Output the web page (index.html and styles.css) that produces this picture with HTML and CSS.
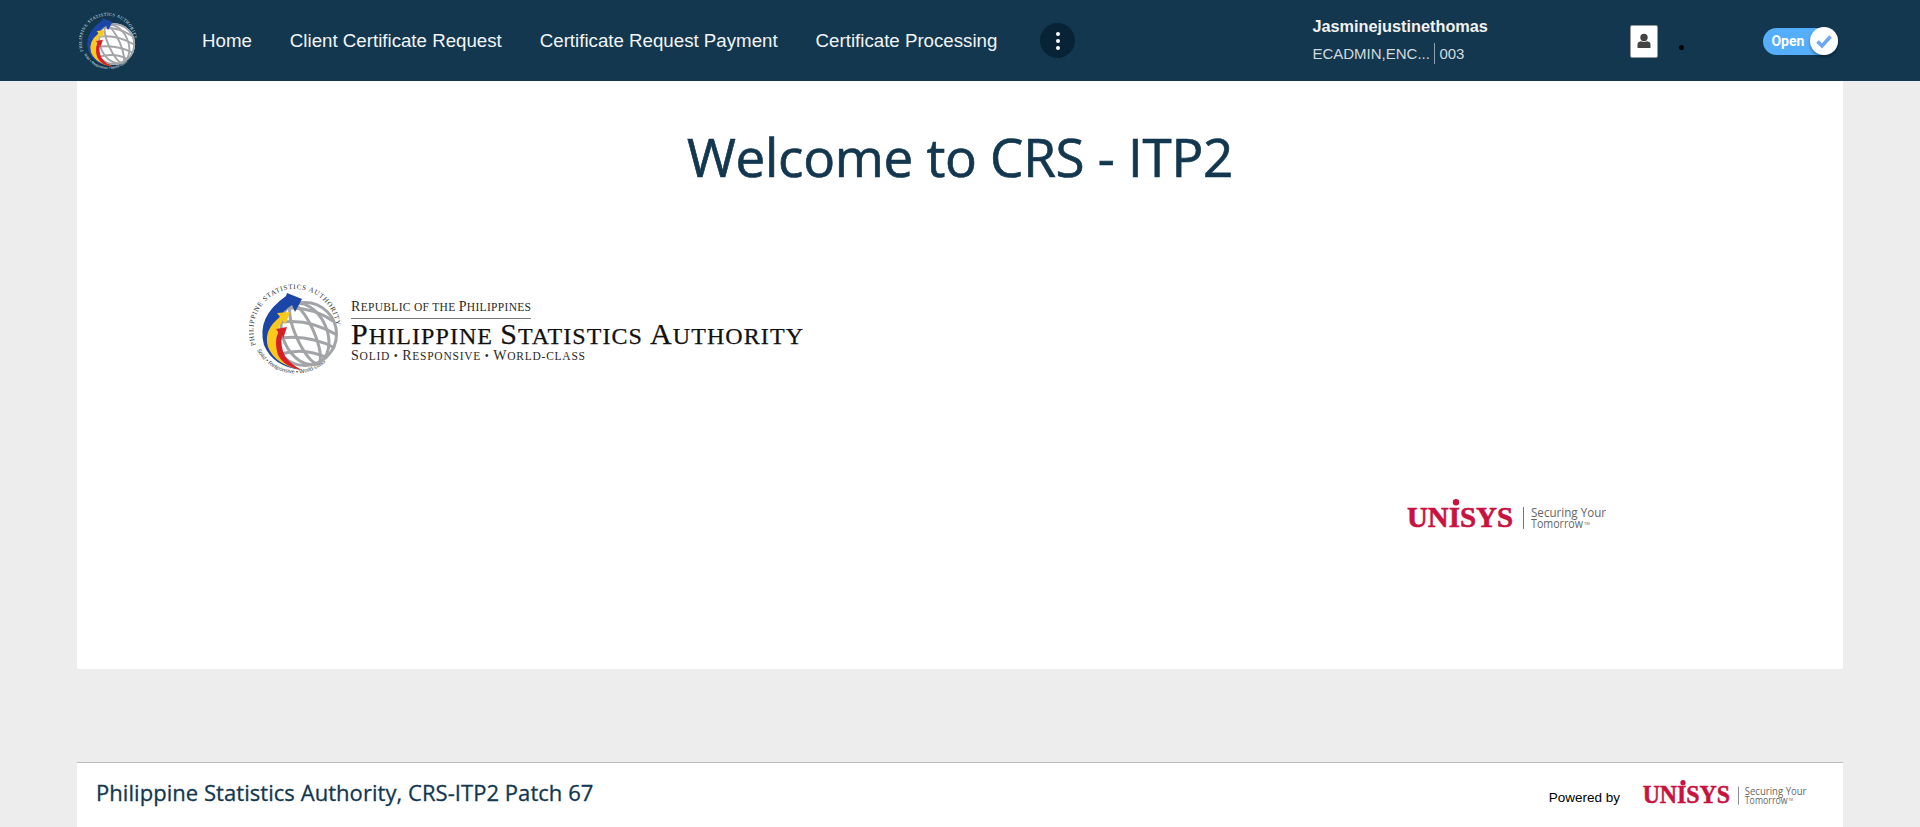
FILE: index.html
```html
<!DOCTYPE html>
<html lang="en">
<head>
<meta charset="utf-8">
<title>CRS - ITP2</title>
<link rel="stylesheet" href="styles.css">
</head>
<body>
<svg class="defs" width="0" height="0" aria-hidden="true">
  <defs>
    <symbol id="psa-seal" viewBox="0 0 92 92">
      <path id="seal-top" d="M7 62 A41.500 41.500 0 1 1 86 58" fill="none"/>
      <path id="seal-bottom" d="M8 67 A44 44 0 0 0 82 73" fill="none"/>
      <text class="seal-top-text"><textPath href="#seal-top" textLength="140">PHILIPPINE STATISTICS AUTHORITY</textPath></text>
      <text class="seal-bottom-text"><textPath href="#seal-bottom" textLength="80">Solid • Responsive • World-class</textPath></text>
      <circle cx="56" cy="51" r="33" fill="#fff"/>
      <g fill="none" stroke="#a2a4a7" stroke-width="3">
        <circle cx="56" cy="51" r="31.500"/>
        <ellipse cx="56" cy="51" rx="9" ry="32" transform="rotate(-24 56 51)"/>
        <ellipse cx="56" cy="51" rx="22" ry="32" transform="rotate(-24 56 51)"/>
        <path d="M38 25 Q64 24 84 38"/>
        <path d="M27 40 Q58 34 88 52"/>
        <path d="M25 56 Q58 50 86 65"/>
        <path d="M32 71 Q56 64 78 75"/>
      </g>
      <path d="M38 10 L53 16 L46 29 L43 22 Q24 34 25 58 Q27 78 53 87 Q24 84 15 62 Q7 34 37 13Z" fill="#1b46a8"/>
      <path d="M28 30 L41 29 L36 42 L34 37 Q26 48 28 62 Q31 76 53 87 Q26 82 19 64 Q14 47 31 34Z" fill="#fcc918"/>
      <path d="M27 46 L38 44 L34 56 L33 52 Q31 64 36 73 Q42 82 53 87 Q35 84 29 72 Q25 60 29 49Z" fill="#d71f2b"/>
    </symbol>
    <symbol id="unisys" viewBox="0 0 200 34">
      <text class="uni-word" x="0" y="28" textLength="106" lengthAdjust="spacingAndGlyphs">UNISYS</text>
      <circle cx="49" cy="3.200" r="3.200" fill="#c8123f"/>
      <rect x="116" y="8" width="1" height="22" fill="#777"/>
      <text class="uni-tag" x="124" y="18" textLength="75" lengthAdjust="spacingAndGlyphs">Securing Your</text>
      <text class="uni-tag" x="124" y="29" textLength="52" lengthAdjust="spacingAndGlyphs">Tomorrow</text>
      <text class="uni-tm" x="177" y="26">TM</text>
    </symbol>
  </defs>
</svg>

<header class="topbar">
  <svg class="seal seal-small"><use href="#psa-seal"/></svg>
  <nav class="nav">
    <a class="nav-link">Home</a>
    <a class="nav-link">Client Certificate Request</a>
    <a class="nav-link">Certificate Request Payment</a>
    <a class="nav-link">Certificate Processing</a>
  </nav>
  <button class="more" aria-label="More"><i></i><i></i><i></i></button>
  <div class="user">
    <div class="user-name">Jasminejustinethomas</div>
    <div class="user-meta"><span class="user-role">ECADMIN,ENC...</span><span class="user-code">003</span></div>
  </div>
  <div class="avatar">
    <svg viewBox="0 0 16 16" width="16" height="16"><circle cx="8" cy="4.500" r="3.700" fill="#444"/><path d="M1.500 15 V11.500 Q1.500 8.800 5 8.300 Q8 9.800 11 8.300 Q14.500 8.800 14.500 11.500 V15Z" fill="#444"/></svg>
  </div>
  <span class="status-dot"></span>
  <div class="toggle">
    <span class="toggle-label">Open</span>
    <span class="toggle-knob">
      <svg viewBox="0 0 20 20" width="20" height="20"><path d="M3.500 10.500 L8 15 L16.500 5.500" fill="none" stroke="#6aa8f5" stroke-width="3.600"/></svg>
    </span>
  </div>
</header>

<main class="panel">
  <h1 class="title">Welcome to CRS - ITP2</h1>
  <div class="psa-logo">
    <svg class="seal seal-large"><use href="#psa-seal"/></svg>
    <svg class="wordmark" viewBox="0 0 456 84">
      <text class="wm-small" x="0" y="23" textLength="180"><tspan class="wm-small-cap">R</tspan>EPUBLIC OF THE <tspan class="wm-small-cap">P</tspan>HILIPPINES</text>
      <rect x="0" y="30" width="180" height="1" fill="#777"/>
      <text class="wm-big" x="0" y="55.500" textLength="452"><tspan class="wm-big-cap">P</tspan>HILIPPINE <tspan class="wm-big-cap">S</tspan>TATISTICS <tspan class="wm-big-cap">A</tspan>UTHORITY</text>
      <text class="wm-small" x="0" y="72" textLength="234"><tspan class="wm-small-cap">S</tspan>OLID • <tspan class="wm-small-cap">R</tspan>ESPONSIVE • <tspan class="wm-small-cap">W</tspan>ORLD-CLASS</text>
    </svg>
  </div>
  <div class="unisys-row">
    <svg class="unisys-large"><use href="#unisys"/></svg>
  </div>
</main>

<footer class="footer">
  <div class="footer-text">Philippine Statistics Authority, CRS-ITP2 Patch 67</div>
  <div class="powered">
    <span class="powered-label">Powered by</span>
    <svg class="unisys-small"><use href="#unisys"/></svg>
  </div>
</footer>
</body>
</html>
```
FILE: styles.css
```css
* { box-sizing: border-box; }
html, body { margin: 0; height: 100%; }
body {
  background: #ededed;
  font-family: "Liberation Sans", Arial, sans-serif;
  display: flex;
  flex-direction: column;
  overflow: hidden;
}
.defs { position: absolute; }

.topbar {
  height: 81px;
  flex: none;
  background: #12374f;
  display: flex;
  align-items: center;
  color: #fff;
}
.seal { display: block; }
.seal-small { width: 58px; height: 58px; margin-left: 79px; color: #dfe6ea; }
.seal-large { width: 92px; height: 92px; color: #333; }
.seal-top-text { font: 7px "Liberation Serif", serif; fill: currentColor; }
.seal-bottom-text { font: 5.500px "Liberation Sans", sans-serif; fill: currentColor; }

.nav { display: flex; gap: 38px; margin-left: 65px; }
.nav-link { font-size: 18.700px; line-height: 24px; color: #f2f5f7; white-space: nowrap; }

.more {
  width: 35px;
  height: 35px;
  margin-left: 43px;
  padding: 0;
  border: 0;
  border-radius: 50%;
  background: #082335;
  display: flex;
  flex-direction: column;
  align-items: center;
  justify-content: center;
  gap: 3px;
}
.more i { width: 4px; height: 4px; border-radius: 50%; background: #fff; display: block; }

.user { width: 318px; margin-left: 237px; }
.user-name { font-size: 16.300px; font-weight: 700; line-height: 20px; color: #f2f2f2; margin-top: -2px; }
.user-meta { display: flex; align-items: center; height: 20px; margin-top: 7px; font-size: 15px; color: #d3dadf; }
.user-role { width: 122px; }
.user-code { border-left: 1px solid #8fa1ad; padding-left: 4px; line-height: 21px; }

.avatar {
  width: 28px;
  height: 33px;
  margin-top: 1px;
  background: #fff;
  border: 1px solid #999;
  border-radius: 2px;
  display: flex;
  align-items: center;
  justify-content: center;
}
.status-dot { width: 5px; height: 5px; border-radius: 50%; background: #000; margin: 14px 0 0 21px; }
.toggle {
  width: 75px;
  height: 27px;
  margin: 1px 0 0 79px;
  border-radius: 14px;
  background: #54aefc;
  display: flex;
  align-items: center;
  justify-content: space-between;
  padding-left: 8px;
}
.toggle-label { font: 700 14px Roboto, sans-serif; color: #fff; }
.toggle-knob {
  width: 28px;
  height: 28px;
  border-radius: 50%;
  background: #fff;
  box-shadow: 0 2px 3px rgba(0, 0, 0, .35);
  display: flex;
  align-items: center;
  justify-content: center;
}

.panel {
  height: 588px;
  flex: none;
  margin: 0 77px;
  background: #fff;
  display: flex;
  flex-direction: column;
}
.title {
  margin: 38px 0 0;
  text-align: center;
  font: 400 53px/76px "Open Sans", sans-serif;
  letter-spacing: -.3px;
  -webkit-text-stroke: .7px #12374f;
  color: #12374f;
}
.psa-logo { display: flex; margin: 88px 0 0 172px; }
.wordmark { width: 456px; height: 84px; margin: 5px 0 0 10px; }
.wm-small { font: 500 11.500px "Liberation Serif", serif; fill: #2a2a2a; }
.wm-small-cap { font-size: 14px; }
.wm-big { font: 500 24px "Liberation Serif", serif; fill: #111; stroke: #111; stroke-width: .25px; }
.wm-big-cap { font-size: 30px; }

.unisys-row { display: flex; margin: 124px 0 0 1330px; }
.unisys-large { width: 200px; height: 34px; }
.uni-word { font: 700 30px "Liberation Serif", serif; fill: #c8123f; stroke: #c8123f; stroke-width: .6px; }
.uni-tag { font: 400 12px "Open Sans", sans-serif; fill: #666; }
.uni-tm { font: 400 4px "Open Sans", sans-serif; fill: #666; }

.footer {
  flex: 1;
  margin: 93px 77px 0;
  background: #fff;
  border-top: 1px solid #bdbdbd;
  display: flex;
  justify-content: space-between;
  padding: 14px 35px 0 19px;
}
.footer-text {
  font: 400 22px/30px "Open Sans", sans-serif;
  letter-spacing: .05px;
  -webkit-text-stroke: .3px #12374f;
  color: #12374f;
}
.powered { display: flex; align-items: flex-start; }
.powered-label { font-size: 13.500px; line-height: 16px; color: #000; margin: 13px 22px 0 0; }
.unisys-small { width: 166px; height: 28px; margin-top: 3px; }
```
